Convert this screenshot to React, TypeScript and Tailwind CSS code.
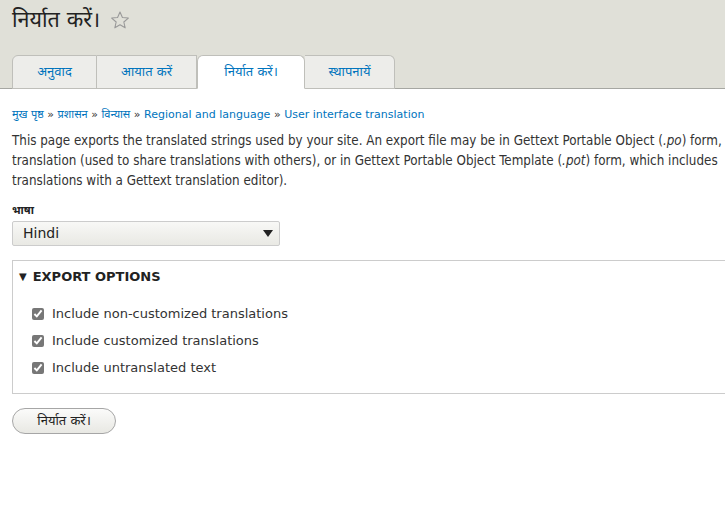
import { useState } from "react";

const tabs = ["अनुवाद", "आयात करें", "निर्यात करें।", "स्थापनायें"];
const options = [
  "Include non-customized translations",
  "Include customized translations",
  "Include untranslated text",
];

export default function App() {
  const [checked, setChecked] = useState([true, true, true]);
  const [open, setOpen] = useState(true);

  return (
    <div className="min-h-[513px] w-[725px] overflow-hidden bg-white text-[#333] font-['DejaVu_Sans','Noto_Sans',sans-serif]">
      <div className="bg-[#e0e0d8] border-b border-[#a6a7a2] px-3">
        <div className="flex h-[55px] items-start pt-[4px]">
          <h1 className="text-[21.5px] leading-[32px] font-normal text-[#222]">
            निर्यात करें।
          </h1>
          <svg width="20" height="20" viewBox="0 0 24 24" className="ml-[10px] mt-[6px]">
            <path
              d="M12 2.5l2.9 6.6 7.1.6-5.4 4.7 1.6 7-6.2-3.7-6.2 3.7 1.6-7L2 9.7l7.1-.6z"
              fill="none"
              stroke="#999"
              strokeWidth="1.3"
              strokeLinejoin="round"
            />
          </svg>
        </div>
        <div className="flex h-[34px] items-end -mb-px">
          {tabs.map((t, i) => (
            <a
              key={t}
              className={`flex h-[34px] items-center justify-center border border-[#bfbfba] text-[13px] text-[#0074bd] ${
                i === 0 ? "w-[85px] rounded-tl-[6px]" : ""
              } ${i === 1 ? "w-[100px] border-l-0" : ""} ${
                i === 2 ? "w-[108px] rounded-t-[6px] bg-white border-b-white" : "bg-[#ededea]"
              } ${i === 3 ? "w-[90px] rounded-tr-[6px] border-l-0" : ""}`}
            >
              {t}
            </a>
          ))}
        </div>
      </div>

      <div className="px-3">
        <div className="mt-[18px] text-[11px] leading-[15px] text-[#0074bd]">
          <a>मुख पृष्ठ</a> <span className="text-[#333]">»</span> <a>प्रशासन</a>{" "}
          <span className="text-[#333]">»</span> <a>विन्यास</a>{" "}
          <span className="text-[#333]">»</span> <a>Regional and language</a>{" "}
          <span className="text-[#333]">»</span> <a>User interface translation</a>
        </div>

        <p className="mt-[9px] whitespace-nowrap text-[13.3px] leading-[20px] font-['DejaVu_Sans_Condensed','DejaVu_Sans',sans-serif]">
          This page exports the translated strings used by your site. An export file may be in Gettext Portable Object (<em>.po</em>) form,
          <br />
          translation (used to share translations with others), or in Gettext Portable Object Template (<em>.pot</em>) form, which includes
          <br />
          translations with a Gettext translation editor).
        </p>

        <label className="mt-[13px] block text-[11px] font-bold leading-[14px] text-[#222]">भाषा</label>
        <div className="mt-[3px] flex h-[25px] w-[268px] items-center justify-between rounded-[2px] border border-[#ccc] bg-gradient-to-b from-[#f8f8f6] to-[#e9e9e4] pl-[10px] pr-[6px] text-[14px] text-[#222]">
          <span>Hindi</span>
          <svg width="10" height="7" viewBox="0 0 10 7">
            <path d="M0 0h10L5 7z" fill="#222" />
          </svg>
        </div>

        <fieldset className="mt-[14px] mr-[-20px] border border-[#ccc] px-[19px] pb-[15px]">
          <button
            onClick={() => setOpen(!open)}
            className="mt-[6px] flex items-center gap-[6px] text-[13px] font-bold uppercase text-[#222] -ml-[13px]"
          >
            <span className="text-[10px]">{open ? "▼" : "►"}</span>
            Export options
          </button>
          {open && (
            <div className="mt-[18px] flex flex-col gap-[8px]">
              {options.map((o, i) => (
                <label key={o} className="flex h-[19px] items-center gap-[8px] text-[13px] text-[#333]">
                  <input
                    type="checkbox"
                    checked={checked[i]}
                    onChange={() => setChecked(checked.map((c, j) => (j === i ? !c : c)))}
                    className="h-[12px] w-[12px] accent-[#777]"
                  />
                  {o}
                </label>
              ))}
            </div>
          )}
        </fieldset>

        <button className="mt-[14px] h-[26px] w-[104px] rounded-full border border-[#a6a6a6] bg-gradient-to-b from-[#fbfbfa] to-[#e8e8e3] text-[13px] text-[#222]">
          निर्यात करें।
        </button>
      </div>
    </div>
  );
}
